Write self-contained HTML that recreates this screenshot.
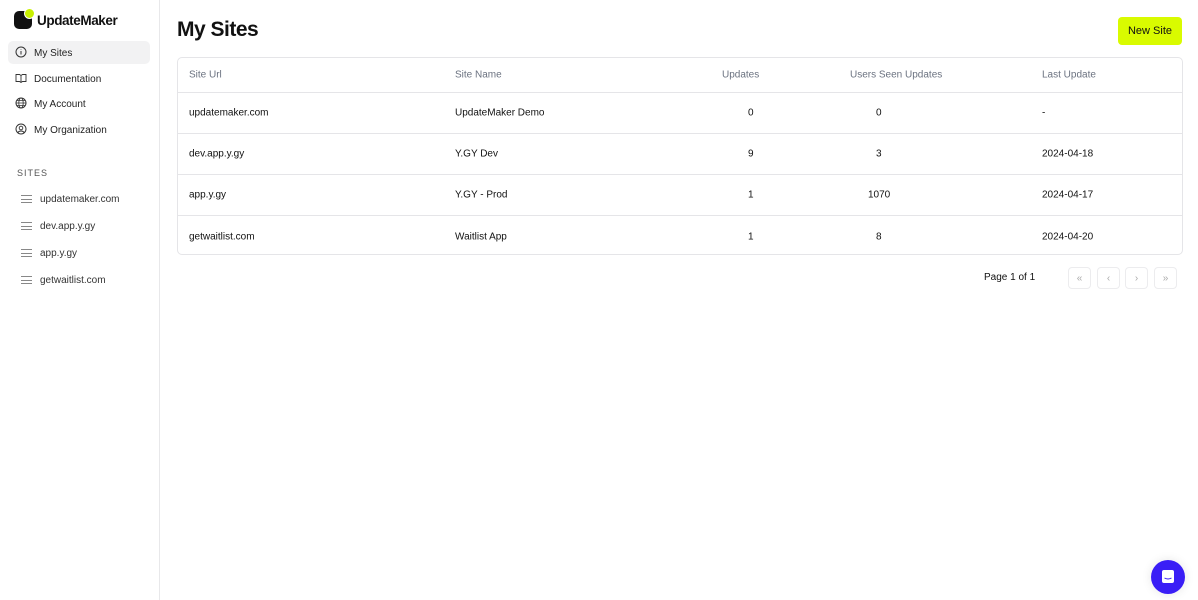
<!DOCTYPE html>
<html><head><style>
*{box-sizing:border-box;margin:0;padding:0}
body{width:1198px;height:600px;overflow:hidden;font-family:"Liberation Sans",sans-serif;background:#fff;color:#111;position:relative}
.side{position:absolute;left:0;top:0;width:160px;height:600px;border-right:1px solid #e8e8ea;background:#fff}
.logo{position:absolute;left:14px;top:11px;width:18px;height:18px;background:#111;border-radius:5px}
.logo:after{content:"";position:absolute;right:-3px;top:-3px;width:9px;height:9px;border-radius:50%;background:#c8f000;border:1px solid #fff}
.brand{position:absolute;left:37px;top:13px;font-size:13.5px;font-weight:bold;letter-spacing:-0.4px}
.nav{position:absolute;left:8px;width:142px;height:23px;font-size:10px;line-height:25px;color:#222;padding-left:26px;border-radius:5px}
.nav svg{position:absolute;left:7px;top:5px}
.act{background:#f2f2f3}
.sec{position:absolute;left:17px;top:168px;font-size:9px;letter-spacing:1px;color:#555}
.site{position:absolute;left:21px;font-size:10px;color:#333;padding-left:19px;line-height:12px}
.ham{position:absolute;left:0;top:1px;width:11px;height:8px;border-top:1px solid #888;border-bottom:1px solid #888}
.ham:after{content:"";position:absolute;left:0;right:0;top:2.5px;border-top:1px solid #888}
h1{position:absolute;left:177px;top:18px;font-size:21px;font-weight:bold;letter-spacing:-0.5px}
.btn{position:absolute;left:1118px;top:17px;width:64px;height:28px;background:#d9fb00;border-radius:4px;font-size:11px;line-height:29px;text-align:center}
.tbl{position:absolute;left:177px;top:57px;width:1006px;height:198px;border:1px solid #e5e5e8;border-radius:5px}
.row{position:absolute;left:0;right:0;height:41px;border-bottom:1px solid #e5e5e8;font-size:10px}
.row span{position:absolute;top:50%;transform:translateY(-50%)}
.hd{color:#6b7280}
.pg{position:absolute;left:984px;top:272px;font-size:10px}
.pb{position:absolute;top:267px;width:23px;height:22px;border:1px solid #ececee;border-radius:4px;color:#aaa;font-size:10px;display:flex;align-items:center;justify-content:center}
.chat{position:absolute;left:1151px;top:560px;width:34px;height:34px;border-radius:50%;background:#3a1ef6;box-shadow:0 0 10px rgba(0,0,0,.1)}
</style></head><body>
<div class="side">
<div class="logo"></div><div class="brand">UpdateMaker</div>
<div class="nav act" style="top:41px"><svg width="12" height="12" viewBox="0 0 12 12"><circle cx="6" cy="6" r="5" fill="none" stroke="#333"/><path d="M6 5v3.5M6 3.3v.4" stroke="#333"/></svg>My Sites</div>
<div class="nav" style="top:67px"><svg width="12" height="12" viewBox="0 0 12 12"><path d="M1 2.5h3.5l1.5 1 1.5-1H11v7H7.5L6 10.5 4.5 9.5H1z M6 3.5v7" fill="none" stroke="#333" stroke-width=".9"/></svg>Documentation</div>
<div class="nav" style="top:92px"><svg width="12" height="12" viewBox="0 0 12 12"><circle cx="6" cy="6" r="5" fill="none" stroke="#333"/><ellipse cx="6" cy="6" rx="2.2" ry="5" fill="none" stroke="#333" stroke-width=".8"/><path d="M1 6h10M2 3.5h8M2 8.5h8" stroke="#333" stroke-width=".8"/></svg>My Account</div>
<div class="nav" style="top:118px"><svg width="12" height="12" viewBox="0 0 12 12"><circle cx="6" cy="6" r="5" fill="none" stroke="#333"/><circle cx="6" cy="5" r="1.8" fill="none" stroke="#333" stroke-width=".9"/><path d="M2.8 9.5c1.5-2 4.9-2 6.4 0" fill="none" stroke="#333" stroke-width=".9"/></svg>My Organization</div>
<div class="sec">SITES</div>
<div class="site" style="top:194px"><div class="ham"></div>updatemaker.com</div>
<div class="site" style="top:221px"><div class="ham"></div>dev.app.y.gy</div>
<div class="site" style="top:248px"><div class="ham"></div>app.y.gy</div>
<div class="site" style="top:275px"><div class="ham"></div>getwaitlist.com</div>
</div>
<h1>My Sites</h1>
<div class="btn">New Site</div>
<div class="tbl">
<div class="row hd" style="top:0;height:35px"><span style="left:11px">Site Url</span><span style="left:277px">Site Name</span><span style="left:544px">Updates</span><span style="left:672px">Users Seen Updates</span><span style="left:864px">Last Update</span></div>
<div class="row" style="top:35px"><span style="left:11px">updatemaker.com</span><span style="left:277px">UpdateMaker Demo</span><span style="left:570px">0</span><span style="left:698px">0</span><span style="left:864px">-</span></div>
<div class="row" style="top:76px"><span style="left:11px">dev.app.y.gy</span><span style="left:277px">Y.GY Dev</span><span style="left:570px">9</span><span style="left:698px">3</span><span style="left:864px">2024-04-18</span></div>
<div class="row" style="top:117px"><span style="left:11px">app.y.gy</span><span style="left:277px">Y.GY - Prod</span><span style="left:570px">1</span><span style="left:690px">1070</span><span style="left:864px">2024-04-17</span></div>
<div class="row" style="top:158px;border-bottom:none"><span style="left:11px">getwaitlist.com</span><span style="left:277px">Waitlist App</span><span style="left:570px">1</span><span style="left:698px">8</span><span style="left:864px">2024-04-20</span></div>
</div>
<div class="pg">Page 1 of 1</div>
<div class="pb" style="left:1068px">«</div>
<div class="pb" style="left:1097px">‹</div>
<div class="pb" style="left:1125px">›</div>
<div class="pb" style="left:1154px">»</div>
<div class="chat"><svg width="34" height="34" viewBox="0 0 34 34"><rect x="11" y="10" width="12" height="13" rx="2" fill="#fff"/><path d="M13.5 18c2 1.3 5 1.3 7 0" fill="none" stroke="#3a1ef6" stroke-width="1"/></svg></div>
</body></html>
